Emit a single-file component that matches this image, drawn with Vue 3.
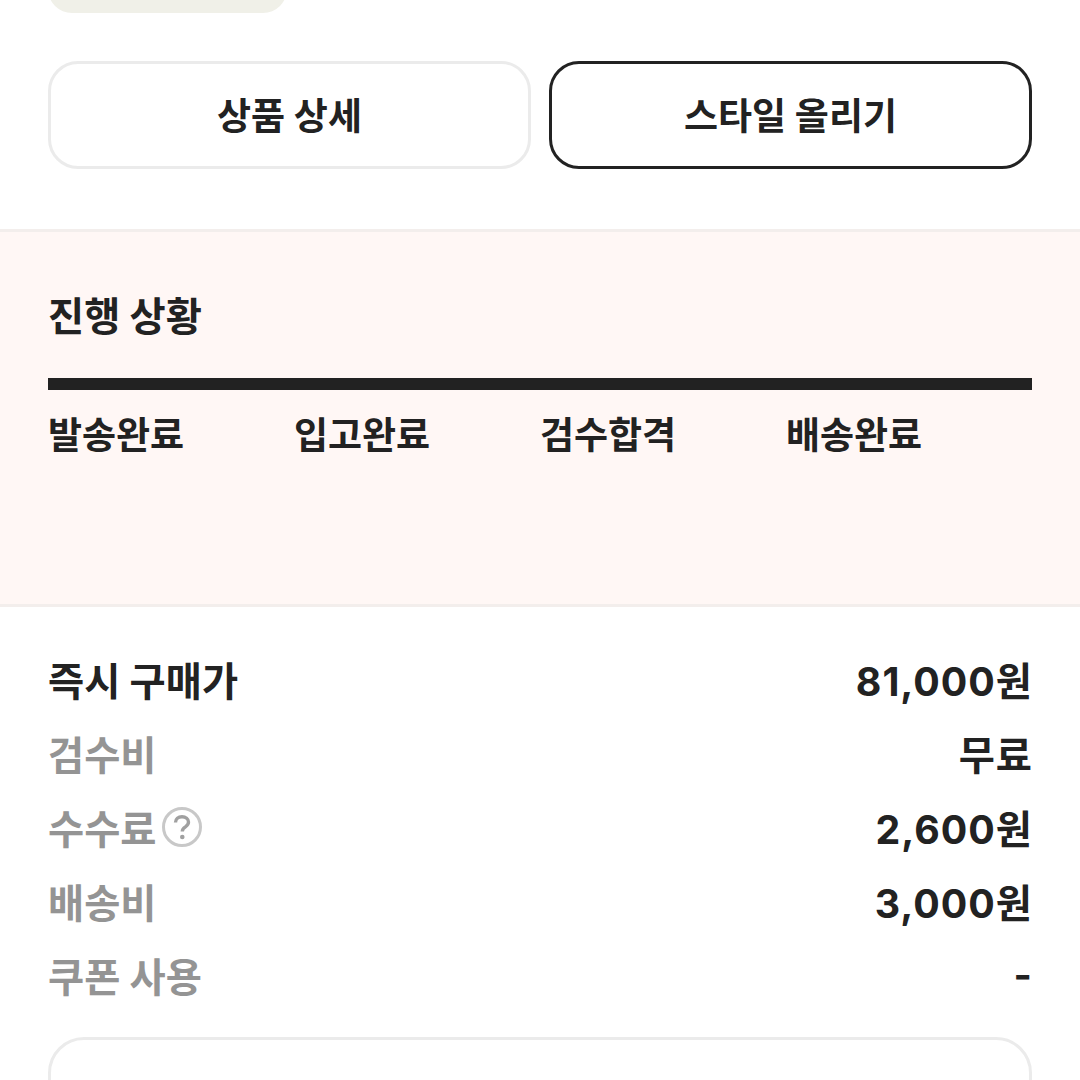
<template>
  <div class="page">
    <div class="top-pill"></div>

    <div class="actions">
      <button class="btn">상품 상세</button>
      <button class="btn dark">스타일 올리기</button>
    </div>

    <section class="progress">
      <h3>진행 상황</h3>
      <div class="bar"></div>
      <div class="steps">
        <span v-for="step in steps" :key="step">{{ step }}</span>
      </div>
    </section>

    <section class="prices">
      <div v-for="row in rows" :key="row.label" class="row" :class="{ main: row.main }">
        <span class="label">
          {{ row.label }}
          <svg v-if="row.help" class="help" width="40" height="40" viewBox="0 0 40 40" fill="none">
            <circle cx="20" cy="20" r="18.5" stroke="#c8c8c8" stroke-width="3" />
            <path
              d="M13.500 15.500c0-3.500 2.800-5.700 6.500-5.700s6.500 2.200 6.500 5.300c0 2.300-1.200 3.500-3.100 4.800-2 1.300-3.100 2.400-3.100 4.600"
              stroke="#a0a0a0"
              stroke-width="3.400"
              fill="none"
            />
            <circle cx="20.300" cy="30" r="2.300" fill="#a0a0a0" />
          </svg>
        </span>
        <span class="value">{{ row.value }}</span>
      </div>
    </section>

    <div class="bottom-box"></div>
  </div>
</template>

<script setup>
const steps = ["발송완료", "입고완료", "검수합격", "배송완료"];

const rows = [
  { label: "즉시 구매가", value: "81,000원", main: true },
  { label: "검수비", value: "무료" },
  { label: "수수료", value: "2,600원", help: true },
  { label: "배송비", value: "3,000원" },
  { label: "쿠폰 사용", value: "-" },
];
</script>

<style scoped>
.page {
  width: 1080px;
  height: 1080px;
  overflow: hidden;
  background: #fff;
  color: #222;
  font-family: Inter, "Noto Sans CJK KR", sans-serif;
  font-weight: 700;
}

.top-pill {
  width: 239px;
  height: 60px;
  margin: -47px 0 0 48px;
  background: #f0f0e8;
  border-radius: 24px;
}

.actions {
  display: flex;
  gap: 18px;
  padding: 48px 48px 60px;
}

.btn {
  flex: 1;
  height: 108px;
  padding: 0 0 2px;
  background: #fff;
  border: 3px solid #ebebeb;
  border-radius: 30px;
  color: #222;
  font: inherit;
  font-size: 37px;
}

.btn.dark {
  border-color: #222;
}

.progress {
  height: 378px;
  box-sizing: border-box;
  padding: 61px 48px 0;
  background: #fff7f5;
  border-top: 3px solid #f3eeec;
  border-bottom: 3px solid #f3eeec;
}

.progress h3 {
  margin: 0 0 37px;
  font-size: 39.300px;
  line-height: 48px;
  font-weight: 700;
}

.bar {
  height: 12px;
  background: #222;
}

.steps {
  display: grid;
  grid-template-columns: repeat(4, 246px);
  margin-top: 22px;
  font-size: 37px;
  line-height: 48px;
}

.prices {
  padding: 34px 48px 0;
}

.row {
  display: flex;
  justify-content: space-between;
  align-items: center;
  height: 74px;
  font-size: 39.300px;
}

.value {
  margin-right: -1px;
  letter-spacing: 1px;
}

.label {
  display: flex;
  align-items: center;
  gap: 6px;
  color: #949494;
}

.row.main .label {
  color: #222;
}

.help {
  margin-top: 1px;
}

.bottom-box {
  height: 120px;
  margin: 26px 48px 0;
  border: 3px solid #ebebeb;
  border-radius: 36px;
}
</style>

<style>
html,
body {
  overflow: hidden;
}
</style>
